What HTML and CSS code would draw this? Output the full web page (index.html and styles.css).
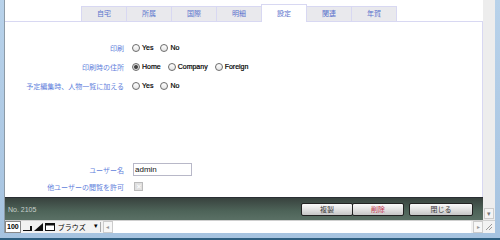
FILE: index.html
```html
<!DOCTYPE html>
<html lang="ja">
<head>
    <meta charset="UTF-8">
    <title>設定</title>
    <link rel="stylesheet" href="styles.css">
</head>
<body>
    <div class="window">
        <div class="client">
            <div class="main">
                <div class="doc">
                    <div class="tabbar">
                        <div class="tab">自宅</div>
                        <div class="tab">所属</div>
                        <div class="tab">国際</div>
                        <div class="tab">明細</div>
                        <div class="tab active">設定</div>
                        <div class="tab">関連</div>
                        <div class="tab">年賀</div>
                    </div>

                    <div class="panel">
                        <div class="fields">
                            <label class="lbl">印刷</label>
                            <div class="opts">
                                <label class="opt"><input type="radio" name="print"> Yes</label>
                                <label class="opt"><input type="radio" name="print"> No</label>
                            </div>

                            <label class="lbl">印刷時の住所</label>
                            <div class="opts">
                                <label class="opt"><input type="radio" name="addr" checked> Home</label>
                                <label class="opt"><input type="radio" name="addr"> Company</label>
                                <label class="opt"><input type="radio" name="addr"> Foreign</label>
                            </div>

                            <label class="lbl">予定編集時、人物一覧に加える</label>
                            <div class="opts">
                                <label class="opt"><input type="radio" name="sched"> Yes</label>
                                <label class="opt"><input type="radio" name="sched"> No</label>
                            </div>
                        </div>

                        <div class="fields bottom">
                            <label class="lbl" for="user">ユーザー名</label>
                            <div class="opts"><input type="text" id="user" class="textbox" value="admin"></div>

                            <label class="lbl">他ユーザーの閲覧を許可</label>
                            <div class="opts"><span class="check">✕</span></div>
                        </div>
                    </div>

                    <div class="footer">
                        <span class="recno">No. 2105</span>
                        <div class="btns">
                            <button class="btn">複製</button>
                            <button class="btn danger">削除</button>
                            <button class="btn close">閉じる</button>
                        </div>
                    </div>
                </div>

                <div class="vscroll">
                    <span class="arrow">▾</span>
                </div>
            </div>

            <div class="status">
                <span class="zoom">100</span>
                <span class="zicon">
                    <svg width="9" height="8" viewBox="0 0 9 8"><path d="M0 7h9v1H0zM7 3h2v4H7z" fill="#111"/></svg>
                </span>
                <span class="zicon">
                    <svg width="9" height="8" viewBox="0 0 9 8"><path d="M0 8L9 0v8z" fill="#111"/></svg>
                </span>
                <span class="zicon">
                    <svg width="10" height="8" viewBox="0 0 10 8"><rect x="0.5" y="0.5" width="9" height="7" fill="#fff" stroke="#111"/><rect x="0.5" y="0.5" width="9" height="2" fill="#111"/></svg>
                </span>
                <span class="mode">ブラウズ<span class="drop">▾</span></span>
                <span class="hleft">◂</span>
                <span class="htrack"></span>
                <span class="hright">▸</span>
                <span class="grip">
                    <svg width="8" height="8" viewBox="0 0 8 8"><path d="M7 1L1 7M7 4L4 7" stroke="#999" stroke-width="1"/></svg>
                </span>
            </div>
        </div>
    </div>
</body>
</html>
```

FILE: styles.css
```css
body {
    margin: 0;
    width: 500px;
    height: 240px;
    overflow: hidden;
    font-family: "Liberation Sans", "Noto Sans CJK JP", sans-serif;
}
.window {
    display: flex;
    flex-direction: column;
    height: 240px;
    box-sizing: border-box;
    padding: 0 5px 5px 4px;
    background: linear-gradient(to bottom, #b8d2ea, #a6c3e0);
    border-bottom: 2px solid #2f5f80;
}
.client {
    flex: 1;
    display: flex;
    flex-direction: column;
    background: #fff;
    border-left: 1px solid #8c9aa6;
}
.main {
    flex: 1;
    display: flex;
}
.doc {
    flex: 1;
    display: flex;
    flex-direction: column;
}
.tabbar {
    height: 21px;
    display: flex;
    align-items: flex-end;
    padding-left: 76px;
    box-sizing: border-box;
}
.tab {
    width: 46px;
    height: 15px;
    box-sizing: border-box;
    background: #e9e9ed;
    border: 1px solid #d8d8f2;
    border-bottom: none;
    margin-right: -1px;
    color: #5a72cc;
    font-size: 7px;
    line-height: 14px;
    text-align: center;
}
.tab.active {
    height: 18px;
    background: #fff;
    margin-bottom: -1px;
    position: relative;
    line-height: 18px;
}
.panel {
    flex: 1;
    display: flex;
    flex-direction: column;
    border-top: 1px solid #d8d8f2;
    border-right: 1px solid #d8d8f2;
    padding: 16px 0 2px;
}
.fields {
    display: grid;
    grid-template-columns: 119px auto;
    grid-auto-rows: 19px;
    column-gap: 8px;
    align-items: center;
}
.fields.bottom {
    margin-top: auto;
    grid-auto-rows: 17px;
}
.lbl {
    text-align: right;
    color: #5f7fdc;
    font-size: 7px;
}
.opts {
    display: flex;
    align-items: center;
    gap: 7px;
}
.opt {
    display: flex;
    align-items: center;
    gap: 1px;
    font-size: 7px;
    color: #000;
    -webkit-text-stroke: 0.2px #000;
}
.opt input {
    appearance: none;
    width: 8px;
    height: 8px;
    margin: 0 1px 0 0;
    border: 1px solid #6c6c6c;
    border-radius: 50%;
    background: linear-gradient(#fff, #e4e4e4);
    box-sizing: border-box;
}
.opt input:checked {
    background: radial-gradient(circle, #333 0, #555 1.6px, #ddd 2.4px, #eee 100%);
}
.textbox {
    width: 59px;
    height: 13px;
    box-sizing: border-box;
    border: 1px solid #b8b8c8;
    padding: 0 1px;
    font-family: inherit;
    font-size: 8px;
    color: #111;
    margin-left: 1px;
}
.check {
    width: 9px;
    height: 9px;
    margin-left: 2px;
    box-sizing: border-box;
    border: 1px solid #bbb;
    background: #e0e0e0;
    color: #fff;
    font-size: 7px;
    line-height: 7px;
    text-align: center;
}
.footer {
    height: 22px;
    display: flex;
    align-items: center;
    border-top: 1px solid #2a2e34;
    background: linear-gradient(to bottom, #38423e, #4e6459 60%, #5a7065);
    padding-left: 3px;
}
.recno {
    color: #c8d0cc;
    font-size: 7px;
}
.btns {
    margin-left: auto;
    margin-right: 10px;
    display: flex;
}
.btn {
    width: 52px;
    height: 13px;
    padding: 0;
    border: 1px solid #222;
    border-radius: 2px;
    background: linear-gradient(to bottom, #fbfbfb, #e2e2e2 50%, #c6c6c6);
    color: #333;
    font-family: inherit;
    font-size: 7px;
}
.btn.danger {
    color: #c2304a;
    margin-left: -1px;
}
.btn.close {
    width: 64px;
    margin-left: 5px;
}
.vscroll {
    width: 12px;
    display: flex;
    flex-direction: column;
    justify-content: flex-end;
    background: #ededed;
}
.arrow {
    height: 9px;
    margin: 0 1px 1px;
    border: 1px solid #ccc;
    background: #f4f4f4;
    color: #777;
    font-size: 7px;
    line-height: 9px;
    text-align: center;
}
.status {
    height: 12px;
    display: flex;
    align-items: center;
    border-top: 1px solid #d0d0d0;
    background: #f2f2f2;
    font-size: 7px;
}
.zoom {
    height: 10px;
    padding: 0 1px;
    border: 1px solid #888;
    background: #fff;
    line-height: 10px;
    font-weight: bold;
}
.zicon {
    display: flex;
    margin-left: 2px;
}
.mode {
    width: 40px;
    margin-left: 3px;
    display: flex;
    justify-content: space-between;
    padding-right: 2px;
    border-right: 1px solid #aaa;
}
.drop {
    color: #000;
}
.hleft, .hright {
    width: 8px;
    height: 10px;
    border: 1px solid #ccc;
    background: #f7f7f7;
    color: #999;
    font-size: 6px;
    line-height: 10px;
    text-align: center;
    margin-left: 2px;
}
.htrack {
    flex: 1;
    height: 12px;
    background: #fff;
}
.grip {
    width: 12px;
    display: flex;
    justify-content: center;
}
```
